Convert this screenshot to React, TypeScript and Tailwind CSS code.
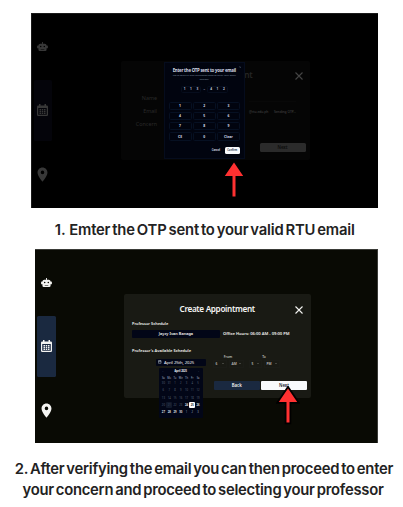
import { MdLocationOn } from "react-icons/md";

const ui = "font-['Noto_Sans','Open_Sans',sans-serif]";
const caption =
  "font-['Inter',sans-serif] font-semibold text-[#222222] whitespace-pre text-center text-[14.8px] leading-[20.5px] [word-spacing:-1.5px]";

function RobotIcon() {
  return (
    <svg viewBox="0 0 24 20" className="w-[11px] h-[9px]" fill="currentColor">
      <path
        fillRule="evenodd"
        d="M11 0h2v4h4a4 4 0 0 1 4 4h1.500a1.500 1.500 0 0 1 1.500 1.500v3a1.500 1.500 0 0 1-1.500 1.500H21v3a3 3 0 0 1-3 3H6a3 3 0 0 1-3-3v-3H1.500A1.500 1.500 0 0 1 0 12.500v-3A1.500 1.500 0 0 1 1.500 8H3a4 4 0 0 1 4-4h4zM8 8.500a1.700 1.700 0 1 0 0 3.400 1.700 1.700 0 0 0 0-3.400zm8 0a1.700 1.700 0 1 0 0 3.400 1.700 1.700 0 0 0 0-3.400zM8 15.500v1h8v-1z"
      />
    </svg>
  );
}

function CalendarIcon() {
  return (
    <svg viewBox="0 0 22 24" className="w-[11px] h-[12px]" fill="currentColor">
      <path
        fillRule="evenodd"
        d="M4 0h3v3h8V0h3v3h1.500A2.500 2.500 0 0 1 22 5.500v16a2.500 2.500 0 0 1-2.500 2.500h-17A2.500 2.500 0 0 1 0 21.500v-16A2.500 2.500 0 0 1 2.500 3H4zM2.500 8v13.500h17V8z"
      />
      <path d="M5 10h3v3H5zM9.500 10h3v3h-3zM14 10h3v3h-3zM5 14h3v2.500H5zM9.500 14h3v2.500h-3zM14 14h3v2.500h-3zM5 17.500h3V20H5zM9.500 17.500h3V20h-3zM14 17.500h3V20h-3z" />
    </svg>
  );
}

function CloseIcon({ className }: { className: string }) {
  return (
    <svg viewBox="0 0 8 8" className={className} fill="none" stroke="currentColor" strokeWidth="1.1">
      <path d="M.5.5l7 7M7.500.5l-7 7" />
    </svg>
  );
}

function Sidebar({ tile }: { tile: string }) {
  return (
    <div className="flex flex-col items-center w-[18.500px] shrink-0">
      <div className="h-[65.500px] w-full flex justify-center pt-[27.500px]">
        <RobotIcon />
      </div>
      <div className={`h-[61.500px] w-full flex items-center justify-center rounded-[1.500px] ${tile}`}>
        <CalendarIcon />
      </div>
      <div className="h-[66px] flex items-start justify-center pt-[25px]">
        <MdLocationOn className="w-[17px] h-[17px]" />
      </div>
    </div>
  );
}

function Arrow({ className, outline }: { className: string; outline: number }) {
  return (
    <svg viewBox="0 0 24 40" className={className}>
      <path
        d="M12 2.500l9.200 13.500h-7.700v20.500h-3V16H2.800z"
        fill="#ff3131"
        stroke="#000"
        strokeWidth={outline}
        paintOrder="stroke"
      />
    </svg>
  );
}

const keys = ["1", "2", "3", "4", "5", "6", "7", "8", "9", "CE", "0", "Clear"];

function Slots({ digits }: { digits: string[] }) {
  return (
    <div className="flex h-[7px] rounded-[1.500px] border-[1px] border-[#060d1d]">
      {digits.map((d, i) => (
        <span key={i} className="w-[6.300px] flex items-center justify-center">
          {d}
        </span>
      ))}
    </div>
  );
}

function OtpModal() {
  return (
    <div className="absolute left-[132px] top-[47.500px] w-[80.500px] h-[97px] bg-[#01040f] border border-[#050c1d] flex flex-col px-[3.500px] text-[#d5dbe5]">
      <CloseIcon className="absolute right-[2.500px] top-[3px] w-[2.500px] h-[2.500px] text-[#64748b]" />
      <div className="mt-[4px] text-center font-bold text-[4.300px] leading-[7px] tracking-[-0.200px] whitespace-nowrap">
        Enter the OTP sent to your email
      </div>
      <div className="mt-[0.500px] text-center text-[2.500px] leading-[3.700px] tracking-[-0.050px] text-[#77849b] whitespace-nowrap">
        We've sent a 6-digit verification code to verify your email
        <br />
        address.
      </div>
      <div className="mt-[4.800px] flex items-center justify-center gap-[2px] text-[3.200px] font-semibold leading-none">
        <Slots digits={["1", "1", "3"]} />
        <span>–</span>
        <Slots digits={["4", "1", "2"]} />
      </div>
      <div className="mt-[8.500px] grid grid-cols-3 gap-x-[1px] gap-y-[1.500px]">
        {keys.map((k) => (
          <div
            key={k}
            className="h-[8.600px] flex items-center justify-center rounded-[1.500px] border-[1px] border-[#061022] text-[3.400px] font-bold leading-none"
          >
            {k}
          </div>
        ))}
      </div>
      <div className="mt-[6.500px] flex justify-end gap-[2px] text-[2.500px] font-bold leading-none">
        <div className="w-[13px] h-[7px] flex items-center justify-center">Cancel</div>
        <div className="w-[15.500px] h-[7px] flex items-center justify-center rounded-[1.500px] bg-[#f8fafc] text-[#334155]">
          Confirm
        </div>
      </div>
    </div>
  );
}

function OtpScreen() {
  return (
    <div className="relative ml-[31px] w-[346.700px] h-[195px] shrink-0 bg-black flex pl-[1.500px] border-l border-t border-[#1b1b1b] text-[#383838]">
      <Sidebar tile="bg-[#04040a]" />
      <div className="ml-[68.500px] mt-[46.500px] w-[189.500px] h-[99.500px] rounded-[2px] bg-[#050505] flex flex-col">
        <div className="flex h-[30px] items-center justify-end pr-[7.500px]">
          <span className="text-[8.400px] font-semibold text-[#252525] mr-[42px] tracking-[-0.250px]">ent</span>
          <CloseIcon className="w-[8px] h-[8px] text-[#454545]" />
        </div>
        <div className="flex h-[45px] leading-[13px] text-[#2a2a2a] mt-[1px]">
          <div className="w-[36.500px] text-right text-[5.400px]">
            <div>Name</div>
            <div>Email</div>
            <div>Concern</div>
          </div>
          <div className="ml-[92px] mt-[9px] w-[47px] border-t border-[#080808] flex justify-between pt-[3px] text-[3.300px] text-[#4a4a4a] whitespace-nowrap">
            <span>@rtu.edu.ph</span>
            <span>Sending OTP...</span>
          </div>
        </div>
        <div className="ml-auto mr-[4.500px] mt-[6.500px] w-[46px] h-[9px] rounded-[1.500px] bg-[#2b2b2b] text-[#0a0a0a] text-[4.300px] font-semibold flex items-center justify-center leading-none">
          Next
        </div>
      </div>
      <OtpModal />
      <Arrow className="absolute left-[190px] top-[146px] w-[24px] h-[40px]" outline={2} />
    </div>
  );
}

const days = ["Su", "Mo", "Tu", "We", "Th", "Fr", "Sa"];
const dates = [
  30, 31, 1, 2, 3, 4, 5, 6, 7, 8, 9, 10, 11, 12, 13, 14, 15, 16, 17, 18, 19, 20, 21, 22, 23, 24, 25, 26, 27, 28, 29,
  30, 1, 2, 3,
];

function dateStyle(i: number) {
  if (i === 26) return "bg-white text-[#0f172a] font-bold";
  if (i === 22) return "bg-[#11192b] text-[#3f4a5f]";
  if (i > 31) return "text-[#94a3b8]";
  if (i > 24) return "text-[#f1f5f9] font-semibold";
  return "text-[#566176]";
}

function CalendarPopover() {
  return (
    <div className="absolute left-[123.500px] top-[117.500px] w-[44.500px] h-[50.500px] rounded-[1px] bg-[#020617] px-[2px] text-[#f8fafc]">
      <div className="h-[8px] flex items-center justify-between px-[2px] text-[2.500px] font-bold leading-none">
        <span className="text-[#64748b] font-normal">‹</span>
        <span>April 2025</span>
        <span className="text-[#64748b] font-normal">›</span>
      </div>
      <div className="grid grid-cols-7 h-[5px] text-[2.600px] leading-[5px] text-center text-[#a3aec0]">
        {days.map((d) => (
          <span key={d}>{d}</span>
        ))}
      </div>
      <div className="grid grid-cols-7 gap-y-[1.350px] text-[2.700px] leading-none mt-[0.300px]">
        {dates.map((d, i) => (
          <span key={i} className={`h-[5.800px] flex items-center justify-center rounded-[1px] ${dateStyle(i)}`}>
            {d}
          </span>
        ))}
      </div>
    </div>
  );
}

function Select({ value, className }: { value: string; className: string }) {
  return (
    <div className={`h-[8px] flex items-center justify-between pl-[2px] pr-[2px] border border-[#1b1c17] ${className}`}>
      <span>{value}</span>
      <svg viewBox="0 0 4 3" className="w-[2px] h-[1.500px]" fill="none" stroke="#8a8a84">
        <path d="M.5.5L2 2 3.500.5" />
      </svg>
    </div>
  );
}

function AppointmentScreen() {
  return (
    <div className="relative ml-[35px] w-[342.700px] h-[194px] shrink-0 bg-[#090a04] flex pl-[2px] border-t border-r border-[#3a3b37] text-[#f4f4f2]">
      <Sidebar tile="bg-[#1a2940]" />
      <div className="ml-[68.500px] mt-[44px] w-[187px] h-[104px] rounded-[2px] bg-[#191a14] flex flex-col pl-[8px]">
        <div className="flex h-[26px] items-center pt-[5px]">
          <span className="ml-[47.500px] w-[76px] text-[8.200px] font-semibold leading-none tracking-[-0.330px] whitespace-nowrap">
            Create Appointment
          </span>
          <CloseIcon className="ml-[39.500px] w-[8px] h-[8px]" />
        </div>
        <div className="text-[3.900px] font-semibold leading-[6px] mt-[0.500px]">Professor Schedule</div>
        <div className="flex items-center mt-[3.500px] text-[3.900px] font-semibold leading-none">
          <div className="w-[88px] h-[7.500px] rounded-[1px] bg-[#020617] flex items-center justify-center">
            Jayzy Ivan Banaga
          </div>
          <span className="ml-[3px] text-[4.100px] whitespace-nowrap">Office Hours: 06:00 AM - 09:00 PM</span>
        </div>
        <div className="text-[4px] font-semibold leading-[6px] mt-[10.500px]">Professor's Available Schedule</div>
        <div className="flex h-[17px]">
          <div className="ml-[24px] mt-[4.500px] w-[50px] h-[7px] rounded-[1px] bg-[#020617] flex items-center pl-[2px] text-[4.300px] leading-none whitespace-nowrap">
            <svg viewBox="0 0 8 8" className="w-[3.500px] h-[3.500px]" fill="none" stroke="#cbd5e1">
              <path d="M1 1.500h6v6H1zM1 3.500h6M2.500 0v2M5.500 0v2" />
            </svg>
            <span className="ml-[2.500px] tracking-[-0.100px]">April 25th, 2025</span>
          </div>
          <div className="ml-[6.500px] flex gap-[5px] text-[3.300px] font-semibold leading-none text-[#bdbdb8]">
            <div>
              <div className="h-[6px] flex items-center justify-center">From</div>
              <div className="flex gap-[2px]">
                <Select value="6" className="w-[14px]" />
                <Select value="AM" className="w-[15px]" />
              </div>
            </div>
            <div>
              <div className="h-[6px] flex items-center justify-center">To</div>
              <div className="flex gap-[2px]">
                <Select value="5" className="w-[13px]" />
                <Select value="PM" className="w-[16px]" />
              </div>
            </div>
          </div>
        </div>
        <div className="ml-[82px] mt-[10px] flex gap-[1.500px] text-[4.300px] font-semibold leading-none">
          <div className="w-[45.500px] h-[9px] rounded-[1px] bg-[#1a2940] flex items-center justify-center">Back</div>
          <div className="w-[46px] h-[9px] rounded-[1px] bg-[#f8fafc] text-[#0f172a] flex items-center justify-center">
            Next
          </div>
        </div>
      </div>
      <CalendarPopover />
      <Arrow className="absolute left-[240.500px] top-[136px] w-[24px] h-[40px]" outline={3.6} />
    </div>
  );
}

export default function App() {
  return (
    <div className={`w-[403px] h-[507px] bg-white overflow-hidden flex flex-col pt-[13px] ${ui}`}>
      <OtpScreen />
      <div className={`${caption} h-[41px] pt-[12px] pl-[6.500px] tracking-[-0.190px]`}>
        1.  Emter the OTP sent to your valid RTU email
      </div>
      <AppointmentScreen />
      <div className={`${caption} pt-[16px] pl-[5px] tracking-[-0.240px]`}>
        2. After verifying the email you can then proceed to enter
      </div>
      <div className={`${caption} pl-[3px] tracking-[-0.250px]`}>
        your concern and proceed to selecting your professor
      </div>
    </div>
  );
}
